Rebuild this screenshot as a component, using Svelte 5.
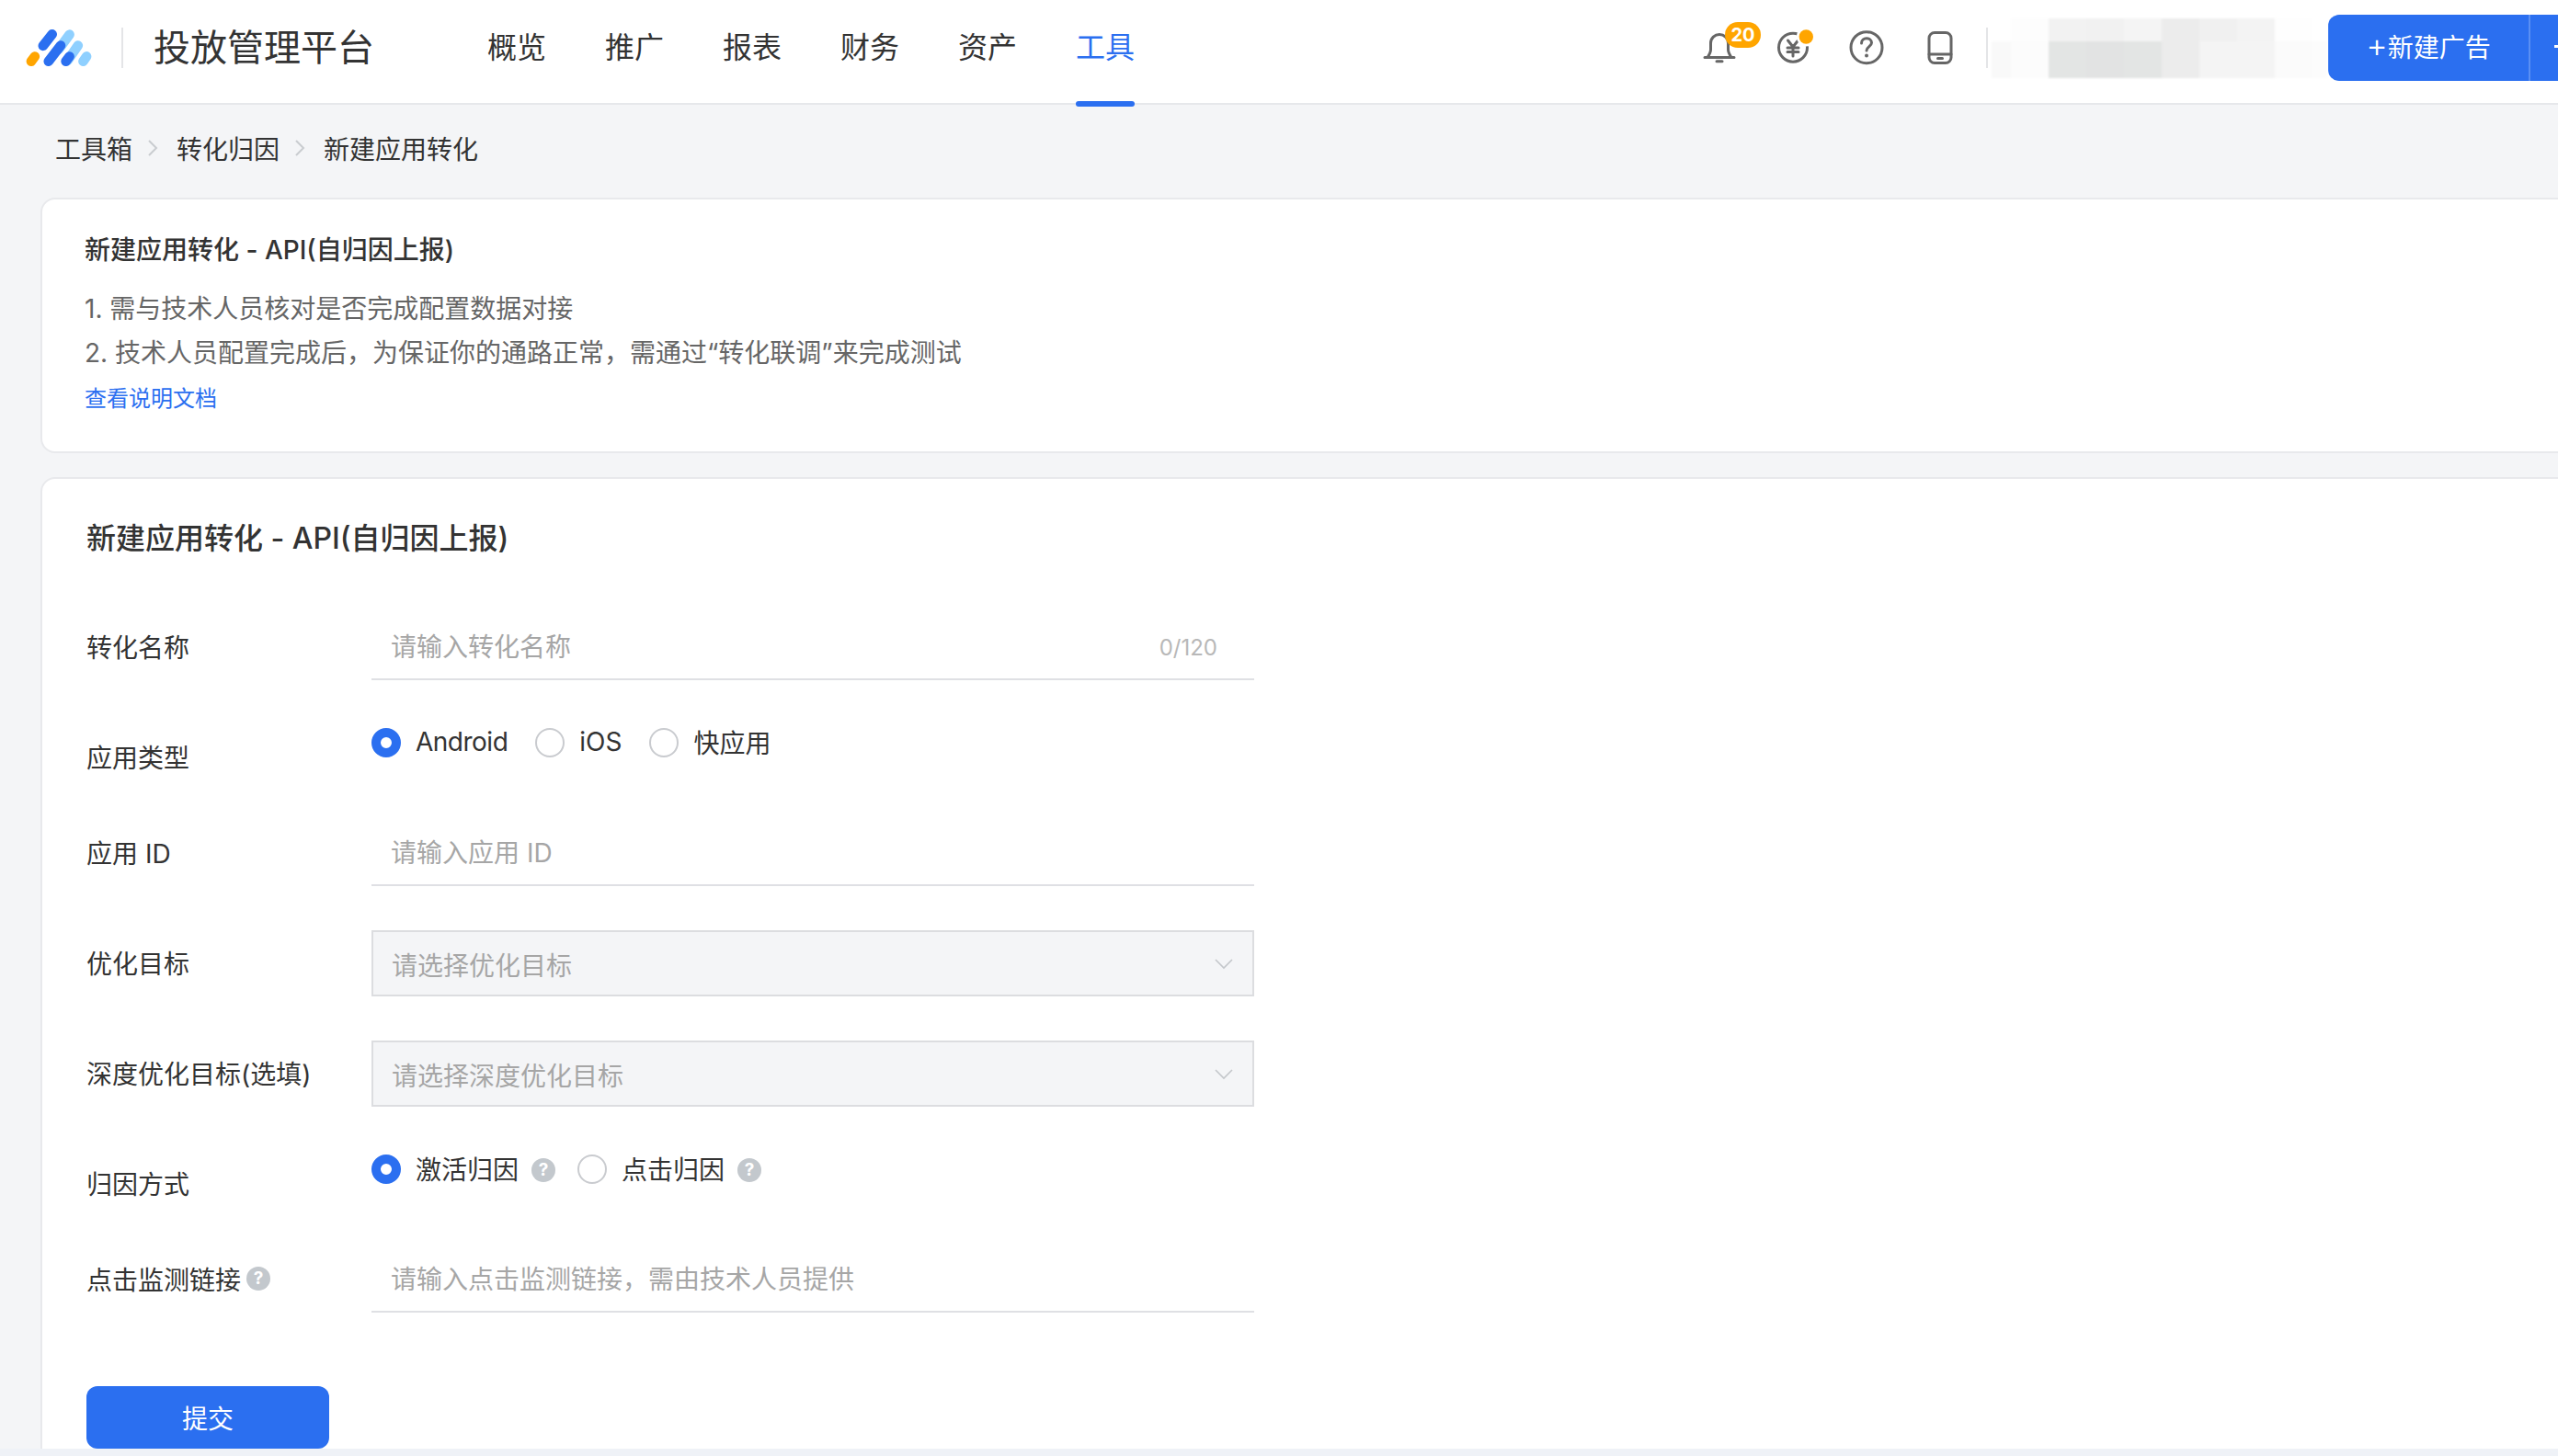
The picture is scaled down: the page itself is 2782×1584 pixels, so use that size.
<script lang="ts">
  const navItems = ['概览', '推广', '报表', '财务', '资产', '工具'];
  const activeNav = '工具';

  const mosaicTop = ['#fff', '#fdfdfd', '#f2f2f2', '#f1f1f1', '#f4f4f4', '#ececec', '#f0f0f0', '#f3f3f3', '#fefefe', '#fff'];
  const mosaicBottom = ['#f9f9f9', '#fcfcfc', '#e3e5e4', '#e2e3e3', '#e3e5e4', '#ececec', '#f4f4f4', '#f4f4f4', '#fbfbfb', '#fcfcfc'];

  const crumbs = ['工具箱', '转化归因', '新建应用转化'];
</script>

<div class="page">
  <header class="topbar">
    <svg class="logo" viewBox="84 95 214 121" aria-hidden="true">
      <g fill="none" stroke-width="32" stroke-linecap="round">
        <path d="M191 160 L226 112" stroke="#8fd0ff" />
        <path d="M220 197 L254 148" stroke="#8fd0ff" />
        <path d="M271 200 L282 184" stroke="#8fd0ff" />
        <path d="M139 149 L169 111" stroke="#2b6ff0" />
        <path d="M157 200 L197 148" stroke="#2b6ff0" />
        <path d="M214 200 L226 184" stroke="#2b6ff0" />
        <path d="M100 200 L112 184" stroke="#ffa500" />
      </g>
    </svg>
    <span class="vline"></span>
    <span class="brand">投放管理平台</span>

    <nav class="nav">
      {#each navItems as item}
        <span class="nav-item" class:active={item === activeNav}>{item}</span>
      {/each}
    </nav>

    <div class="tools">
      <span class="icon">
        <svg viewBox="0 0 48 48" fill="none" stroke="#666" stroke-width="3" stroke-linecap="round" stroke-linejoin="round">
          <path d="M8 34.5 H40 M11 34.5 C13 31.5 14.5 29 14.5 26 V19 C14.5 13.5 19 9.5 24 9.5 C29 9.5 33.5 13.5 33.5 19 V26 C33.5 29 35 31.5 37 34.5" />
          <path d="M21 38.7 H27" />
        </svg>
        <span class="badge">20</span>
      </span>
      <span class="icon">
        <svg viewBox="0 0 48 48" fill="none" stroke="#666" stroke-width="3" stroke-linecap="round" stroke-linejoin="round">
          <circle cx="24" cy="23.7" r="15.5" />
          <path d="M18.5 16 L24 23 L29.5 16 M18 24 H30 M18 28.5 H30 M24 23 V33" />
          <circle cx="38.3" cy="12" r="10.5" fill="#fff" stroke="none" />
          <circle cx="38.3" cy="12" r="7.7" fill="#ffa500" stroke="none" />
        </svg>
      </span>
      <span class="icon">
        <svg viewBox="0 0 48 48" fill="none" stroke="#666" stroke-width="3" stroke-linecap="round">
          <circle cx="24" cy="23.7" r="17" />
          <path d="M18.5 19 C18.5 15.5 21 13.8 24 13.8 C27 13.8 29.5 15.7 29.5 18.6 C29.5 22.5 24 22.8 24 27" />
          <circle cx="24" cy="32.5" r="2" fill="#666" stroke="none" />
        </svg>
      </span>
      <span class="icon">
        <svg viewBox="0 0 48 48" fill="none" stroke="#666" stroke-width="3" stroke-linecap="round">
          <rect x="12" y="7.5" width="24" height="33" rx="6" />
          <path d="M12 31 H36 M21.5 35.6 H26.5" />
        </svg>
      </span>
    </div>

    <span class="vline after-tools"></span>

    <div class="mosaic" aria-hidden="true">
      {#each mosaicTop as c}<i style:background={c}></i>{/each}
      {#each mosaicBottom as c}<i style:background={c}></i>{/each}
    </div>

    <div class="create">
      <span class="create-main"><span class="plus">+</span>新建广告</span>
      <span class="create-more"><span class="caret"></span></span>
    </div>
  </header>

  <main class="content">
    <div class="crumbs">
      {#each crumbs as crumb, i}
        {#if i > 0}
          <svg class="crumb-sep" viewBox="0 0 12 20" fill="none" stroke="#c9ccd0" stroke-width="2">
            <path d="M2 2 L10 10 L2 18" />
          </svg>
        {/if}
        <span>{crumb}</span>
      {/each}
    </div>

    <section class="card intro">
      <h2>新建应用转化 - API(自归因上报)</h2>
      <ol>
        <li>1. 需与技术人员核对是否完成配置数据对接</li>
        <li>2. 技术人员配置完成后，为保证你的通路正常，需通过“转化联调”来完成测试</li>
      </ol>
      <a class="doc" href="#doc">查看说明文档</a>
    </section>

    <section class="card form-card">
      <h1>新建应用转化 - API(自归因上报)</h1>

      <div class="form">
        <div class="row">
          <span class="label">转化名称</span>
          <div class="input">
            <input placeholder="请输入转化名称" />
            <span class="count">0/120</span>
          </div>
        </div>

        <div class="row short">
          <span class="label">应用类型</span>
          <div class="radios">
            <span class="radio on"></span><span class="radio-text tight">Android</span>
            <span class="radio"></span><span class="radio-text">iOS</span>
            <span class="radio"></span><span class="radio-text">快应用</span>
          </div>
        </div>

        <div class="row">
          <span class="label">应用 ID</span>
          <div class="input"><input placeholder="请输入应用 ID" /></div>
        </div>

        <div class="row">
          <span class="label">优化目标</span>
          <div class="select">
            <span>请选择优化目标</span>
            <svg viewBox="0 0 20 12" fill="none" stroke="#c4c7cb" stroke-width="1.6"><path d="M1 1 L10 10 L19 1" /></svg>
          </div>
        </div>

        <div class="row">
          <span class="label">深度优化目标(选填)</span>
          <div class="select">
            <span>请选择深度优化目标</span>
            <svg viewBox="0 0 20 12" fill="none" stroke="#c4c7cb" stroke-width="1.6"><path d="M1 1 L10 10 L19 1" /></svg>
          </div>
        </div>

        <div class="row short">
          <span class="label">归因方式</span>
          <div class="radios">
            <span class="radio on"></span><span class="radio-text">激活归因</span><span class="help">?</span>
            <span class="radio"></span><span class="radio-text">点击归因</span><span class="help">?</span>
          </div>
        </div>

        <div class="row">
          <span class="label">点击监测链接<span class="help in-label">?</span></span>
          <div class="input"><input placeholder="请输入点击监测链接，需由技术人员提供" /></div>
        </div>
      </div>

      <button class="submit">提交</button>
    </section>
  </main>
</div>

<style>
  :global(body) {
    margin: 0;
    background: #eff2f7;
    font-family: Inter, "Noto Sans CJK SC", sans-serif;
    color: #333;
  }

  .page {
    width: 2782px;
    height: 1576px;
    overflow: hidden;
    background: #f4f5f7;
  }

  .topbar {
    display: flex;
    align-items: center;
    height: 104px;
    padding-bottom: 8px;
    background: #fff;
    border-bottom: 2px solid #e6e8eb;
  }

  .logo {
    width: 72px;
    height: 40px;
    margin-left: 28px;
    flex: none;
  }

  .vline {
    width: 2px;
    height: 44px;
    background: #e4e5e7;
    margin-left: 32px;
    flex: none;
  }

  .brand {
    font-size: 40px;
    line-height: 56px;
    margin-left: 33px;
    flex: none;
  }

  .nav {
    display: flex;
    gap: 64px;
    margin-left: 123px;
    flex: none;
  }

  .nav-item {
    position: relative;
    font-size: 32px;
    line-height: 44px;
    color: #333;
  }

  .nav-item.active {
    color: #2b6ff0;
  }

  .nav-item.active::after {
    content: "";
    position: absolute;
    left: 0;
    right: 0;
    top: 80px;
    height: 6px;
    border-radius: 3px;
    background: #2b6ff0;
  }

  .tools {
    display: flex;
    gap: 32px;
    margin-left: auto;
    flex: none;
  }

  .icon {
    position: relative;
    width: 48px;
    height: 48px;
    display: block;
  }

  .icon svg {
    display: block;
    width: 48px;
    height: 48px;
  }

  .badge {
    position: absolute;
    left: 30px;
    top: -4px;
    width: 39px;
    height: 28px;
    border-radius: 14px;
    background: #ffa500;
    color: #fff;
    font-size: 20px;
    font-weight: 700;
    line-height: 28px;
    text-align: center;
  }

  .vline.after-tools {
    margin-left: 26px;
  }

  .mosaic {
    display: grid;
    grid-template-columns: 21px repeat(8, 41px) 16px;
    grid-template-rows: 25px 40px;
    margin-left: 4px;
    flex: none;
    filter: blur(0.8px);
  }

  .create {
    display: flex;
    height: 72px;
    margin-left: 1px;
    width: 250px;
    flex: none;
    border-radius: 12px 0 0 12px;
    overflow: hidden;
    background: #2b6ff0;
    color: #fff;
  }

  .create-main {
    width: 220px;
    font-size: 28px;
    line-height: 72px;
    text-align: center;
    border-right: 2px solid #5a8ff3;
    box-sizing: border-box;
  }

  .plus {
    font-size: 36px;
    font-weight: 300;
    line-height: 1;
  }

  .create-more {
    position: relative;
    flex: 1;
  }

  .caret {
    position: absolute;
    left: 26px;
    top: 33px;
    width: 6px;
    height: 3px;
    background: #fff;
  }

  .content {
    padding-left: 44px;
  }

  .crumbs {
    display: flex;
    align-items: center;
    height: 94px;
    padding: 0 0 7px 16px;
    font-size: 28px;
    color: #333;
  }

  .crumb-sep {
    width: 12px;
    height: 20px;
    margin: 0 20px 0 16px;
  }

  .card {
    box-sizing: border-box;
    width: 2800px;
    background: #fff;
    border: 2px solid #e8e9ec;
    border-radius: 16px;
  }

  .intro {
    height: 278px;
    padding: 35px 46px 0;
  }

  .intro h2 {
    margin: 0 0 20px;
    font-size: 28px;
    font-weight: 500;
    line-height: 40px;
    color: #333;
  }

  .intro ol {
    margin: 0;
    padding: 0;
    list-style: none;
    font-size: 28px;
    line-height: 48px;
    color: #666;
  }

  .doc {
    display: block;
    margin-top: 2px;
    font-size: 24px;
    line-height: 48px;
    color: #2b6ff0;
    text-decoration: none;
  }

  .form-card {
    margin-top: 26px;
    height: 1100px;
    padding: 43px 48px 0;
  }

  .form-card h1 {
    margin: 0 0 60px;
    font-size: 32px;
    font-weight: 500;
    line-height: 44px;
    color: #333;
  }

  .form {
    display: flex;
    flex-direction: column;
    gap: 48px;
  }

  .row {
    display: flex;
    height: 72px;
    align-items: flex-start;
  }

  .row.short {
    height: 56px;
  }

  .label {
    display: flex;
    align-items: center;
    width: 310px;
    height: 70px;
    flex: none;
    font-size: 28px;
    color: #333;
  }

  .input {
    display: flex;
    align-items: center;
    box-sizing: border-box;
    width: 960px;
    height: 72px;
    padding: 2px 40px 0 21px;
    border-bottom: 2px solid #dfe0e4;
  }

  .input input {
    flex: 1;
    min-width: 0;
    border: none;
    outline: none;
    padding: 0;
    font: inherit;
    font-size: 28px;
    background: transparent;
  }

  .input input::placeholder {
    color: #a6a6a6;
    opacity: 1;
  }

  .count {
    font-size: 24px;
    color: #b8b8b8;
  }

  .select {
    display: flex;
    align-items: center;
    justify-content: space-between;
    box-sizing: border-box;
    width: 960px;
    height: 72px;
    padding: 2px 21px 0 20px;
    background: #f4f5f7;
    border: 2px solid #dcdde0;
    font-size: 28px;
    color: #a6a6a6;
  }

  .select svg {
    width: 20px;
    height: 12px;
  }

  .radios {
    display: flex;
    align-items: center;
    height: 40px;
    font-size: 28px;
    color: #333;
  }

  .radio {
    box-sizing: border-box;
    width: 32px;
    height: 32px;
    border-radius: 50%;
    border: 2px solid #c9cbcf;
    background: #fff;
    flex: none;
  }

  .radio.on {
    border: 10px solid #2b6ff0;
  }

  .radio-text {
    margin: 0 30px 2px 16px;
  }

  .radio-text.tight {
    letter-spacing: -0.5px;
  }

  .help {
    display: inline-block;
    flex: none;
    width: 26px;
    height: 26px;
    border-radius: 50%;
    background: #c3c8cd;
    color: #fff;
    font-size: 19px;
    font-weight: 700;
    line-height: 26px;
    text-align: center;
    margin: 2px 24px 0 -16px;
  }

  .help.in-label {
    margin: 0 0 0 6px;
  }

  .submit {
    display: block;
    width: 264px;
    height: 68px;
    margin-top: 80px;
    border: none;
    border-radius: 12px;
    background: #2b6ff0;
    color: #fff;
    font: inherit;
    font-size: 28px;
  }
</style>
